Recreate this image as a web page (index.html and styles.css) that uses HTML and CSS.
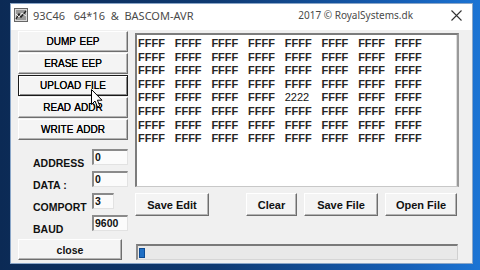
FILE: index.html
```html
<!DOCTYPE html>
<html>
<head>
<meta charset="utf-8">
<link rel="stylesheet" href="styles.css">
</head>
<body>
<div class="window">
  <div class="titlebar">
    <svg class="appicon" width="14" height="14" viewBox="0 0 14 14">
      <rect x="0.5" y="0.5" width="13" height="13" fill="#d8d8d8" stroke="#666"/>
      <rect x="2" y="2" width="10" height="10" fill="#9a9a9a"/>
      <path d="M2 11 L5 6 L7 9 L12 3" fill="none" stroke="#222" stroke-width="1.4"/>
      <path d="M2 6 L5 9 L8 5 L12 8" fill="none" stroke="#eee" stroke-width="1"/>
    </svg>
    <span class="title">93C46   64*16  &amp;  BASCOM-AVR</span>
    <span class="spacer"></span>
    <span class="title credit">2017 © RoyalSystems.dk</span>
    <svg class="closex" width="11" height="11" viewBox="0 0 11 11">
      <path d="M0.5 0.5 L10.5 10.5 M10.5 0.5 L0.5 10.5" stroke="#333" stroke-width="1.1"/>
    </svg>
  </div>
  <div class="client">
    <div class="left">
      <div class="btnstack">
        <div class="btn cmd">DUMP EEP</div>
        <div class="btn cmd">ERASE EEP</div>
        <div class="btn cmd focus">UPLOAD FILE</div>
        <div class="btn cmd">READ ADDR</div>
        <div class="btn cmd">WRITE ADDR</div>
      </div>
      <div class="fields">
        <div class="frow"><span class="lbl">ADDRESS</span><span class="field">0</span></div>
        <div class="frow"><span class="lbl">DATA :</span><span class="field">0</span></div>
        <div class="frow"><span class="lbl">COMPORT</span><span class="field narrow">3</span></div>
        <div class="frow"><span class="lbl">BAUD</span><span class="field">9600</span></div>
      </div>
      <div class="btn closebtn">close</div>
    </div>
    <div class="right">
      <div class="memo">
        <div class="mrow"><span>FFFF</span><span>FFFF</span><span>FFFF</span><span>FFFF</span><span>FFFF</span><span>FFFF</span><span>FFFF</span><span>FFFF</span></div>
        <div class="mrow"><span>FFFF</span><span>FFFF</span><span>FFFF</span><span>FFFF</span><span>FFFF</span><span>FFFF</span><span>FFFF</span><span>FFFF</span></div>
        <div class="mrow"><span>FFFF</span><span>FFFF</span><span>FFFF</span><span>FFFF</span><span>FFFF</span><span>FFFF</span><span>FFFF</span><span>FFFF</span></div>
        <div class="mrow"><span>FFFF</span><span>FFFF</span><span>FFFF</span><span>FFFF</span><span>FFFF</span><span>FFFF</span><span>FFFF</span><span>FFFF</span></div>
        <div class="mrow"><span>FFFF</span><span>FFFF</span><span>FFFF</span><span>FFFF</span><span class="num">2222</span><span>FFFF</span><span>FFFF</span><span>FFFF</span></div>
        <div class="mrow"><span>FFFF</span><span>FFFF</span><span>FFFF</span><span>FFFF</span><span>FFFF</span><span>FFFF</span><span>FFFF</span><span>FFFF</span></div>
        <div class="mrow"><span>FFFF</span><span>FFFF</span><span>FFFF</span><span>FFFF</span><span>FFFF</span><span>FFFF</span><span>FFFF</span><span>FFFF</span></div>
        <div class="mrow"><span>FFFF</span><span>FFFF</span><span>FFFF</span><span>FFFF</span><span>FFFF</span><span>FFFF</span><span>FFFF</span><span>FFFF</span></div>
      </div>
      <div class="actions">
        <div class="btn act w74">Save Edit</div>
        <div class="btn act w51 clear">Clear</div>
        <div class="btn act w74">Save File</div>
        <div class="btn act w72">Open File</div>
      </div>
      <div class="progress"><div class="chunk"></div></div>
    </div>
  </div>
  <svg class="cursor" width="12" height="19" viewBox="0 0 12 19">
    <path d="M0.5 0.5 L0.5 15.5 L4 12 L6.5 18 L8.8 17 L6.4 11.2 L11 11.2 Z" fill="#fff" stroke="#000" stroke-width="1"/>
  </svg>
</div>
</body>
</html>
```
FILE: styles.css
```css
html, body {
  margin: 0;
  padding: 0;
}
body {
  width: 480px;
  height: 270px;
  overflow: hidden;
  background: linear-gradient(90deg, #0b2a55 0%, #0f3a72 45%, #1660b8 85%, #1c74d4 100%);
  font-family: "Liberation Sans", Arial, sans-serif;
}
.window {
  position: relative;
  margin: 3px 0 0 10px;
  width: 463px;
  height: 261px;
  box-sizing: border-box;
  border: 1px solid #8aa6c8;
  background: #f0f0f0;
  display: flex;
  flex-direction: column;
}
.titlebar {
  height: 26px;
  box-sizing: border-box;
  padding: 0 10px 4px 3px;
  background: #ffffff;
  display: flex;
  align-items: center;
}
.appicon {
  flex: none;
  margin-right: 5px;
}
.title {
  font-family: "Noto Sans", "Open Sans", sans-serif;
  font-size: 11px;
  color: #4a4a4a;
  white-space: pre;
}
.spacer {
  flex: 1;
}
.credit {
  font-size: 10px;
  margin-right: 38px;
}
.closex {
  flex: none;
}
.client {
  flex: 1;
  display: flex;
  padding: 1px 0 0 7px;
}
.left {
  width: 110px;
  display: flex;
  flex-direction: column;
}
.btnstack {
  display: flex;
  flex-direction: column;
  gap: 1px;
}
.btn {
  box-sizing: border-box;
  background: #f4f4f4;
  border-top: 1px solid #ffffff;
  border-left: 1px solid #ffffff;
  border-right: 1px solid #6e6e6e;
  border-bottom: 1px solid #6e6e6e;
  box-shadow: inset -1px -1px 0 #b4b4b4;
  display: flex;
  align-items: center;
  justify-content: center;
  color: #111;
}
.cmd {
  height: 21px;
  font-size: 10px;
  word-spacing: 1px;
  color: #000;
  text-shadow: 0 0 0.4px #000;
}
.focus {
  border: 1px solid #1a1a1a;
  box-shadow: inset 1px 1px 0 #ffffff, inset -1px -1px 0 #8a8a8a;
}
.fields {
  margin-top: 9px;
  display: flex;
  flex-direction: column;
  gap: 6px;
}
.frow {
  height: 16px;
  display: flex;
  align-items: flex-start;
}
.lbl {
  width: 59px;
  margin-left: 15px;
  margin-top: 8px;
  font-size: 10.5px;
  line-height: 12px;
  font-weight: bold;
  color: #111;
  white-space: nowrap;
}
.field {
  width: 36px;
  height: 16px;
  box-sizing: border-box;
  background: #fbfbfb;
  border-top: 2px solid #8a8a8a;
  border-left: 2px solid #8a8a8a;
  border-right: 1px solid #e2e2e2;
  border-bottom: 1px solid #e2e2e2;
  font-size: 10.5px;
  font-weight: bold;
  line-height: 12px;
  padding-left: 1px;
  color: #111;
}
.field.narrow {
  width: 22px;
}
.closebtn {
  margin-top: 8px;
  width: 104px;
  height: 21px;
  font-size: 10.5px;
  font-weight: bold;
}
.right {
  margin-left: 7px;
  display: flex;
  flex-direction: column;
  padding-top: 2px;
}
.memo {
  width: 324px;
  height: 154px;
  box-sizing: border-box;
  background: #ffffff;
  border-top: 2px solid #7c7c7c;
  border-left: 2px solid #7c7c7c;
  border-right: 2px solid #9a9a9a;
  border-bottom: 1px solid #c8c8c8;
  box-shadow: inset -1px 0 0 #dcdcdc;
  padding: 2px 0 0 1px;
}
.mrow {
  display: flex;
  height: 13.6px;
  line-height: 13.6px;
  font-size: 11px;
  font-weight: bold;
  color: #262626;
}
.mrow span {
  width: 36.7px;
  flex: none;
}
.mrow .num {
  font-weight: normal;
  color: #111;
}
.actions {
  margin-top: 6px;
  display: flex;
  gap: 7px;
}
.act {
  height: 23px;
  font-size: 11px;
  font-weight: bold;
}
.w74 { width: 74px; }
.w51 { width: 51px; }
.w72 { width: 72px; }
.clear {
  margin-left: 30px;
}
.progress {
  margin-top: 28px;
  margin-left: 1px;
  width: 322px;
  height: 16px;
  box-sizing: border-box;
  background: #e9e9e9;
  border-top: 2px solid #7a7a7a;
  border-left: 2px solid #8a8a8a;
  border-right: 1px solid #d0d0d0;
  border-bottom: 1px solid #d6d6d6;
  padding: 2px 0 0 1px;
}
.chunk {
  width: 6px;
  height: 10px;
  background: #1f6fc4;
  border: 1px solid #0d4c94;
  box-sizing: border-box;
}
.cursor {
  position: absolute;
  left: 80px;
  top: 85px;
}
```
